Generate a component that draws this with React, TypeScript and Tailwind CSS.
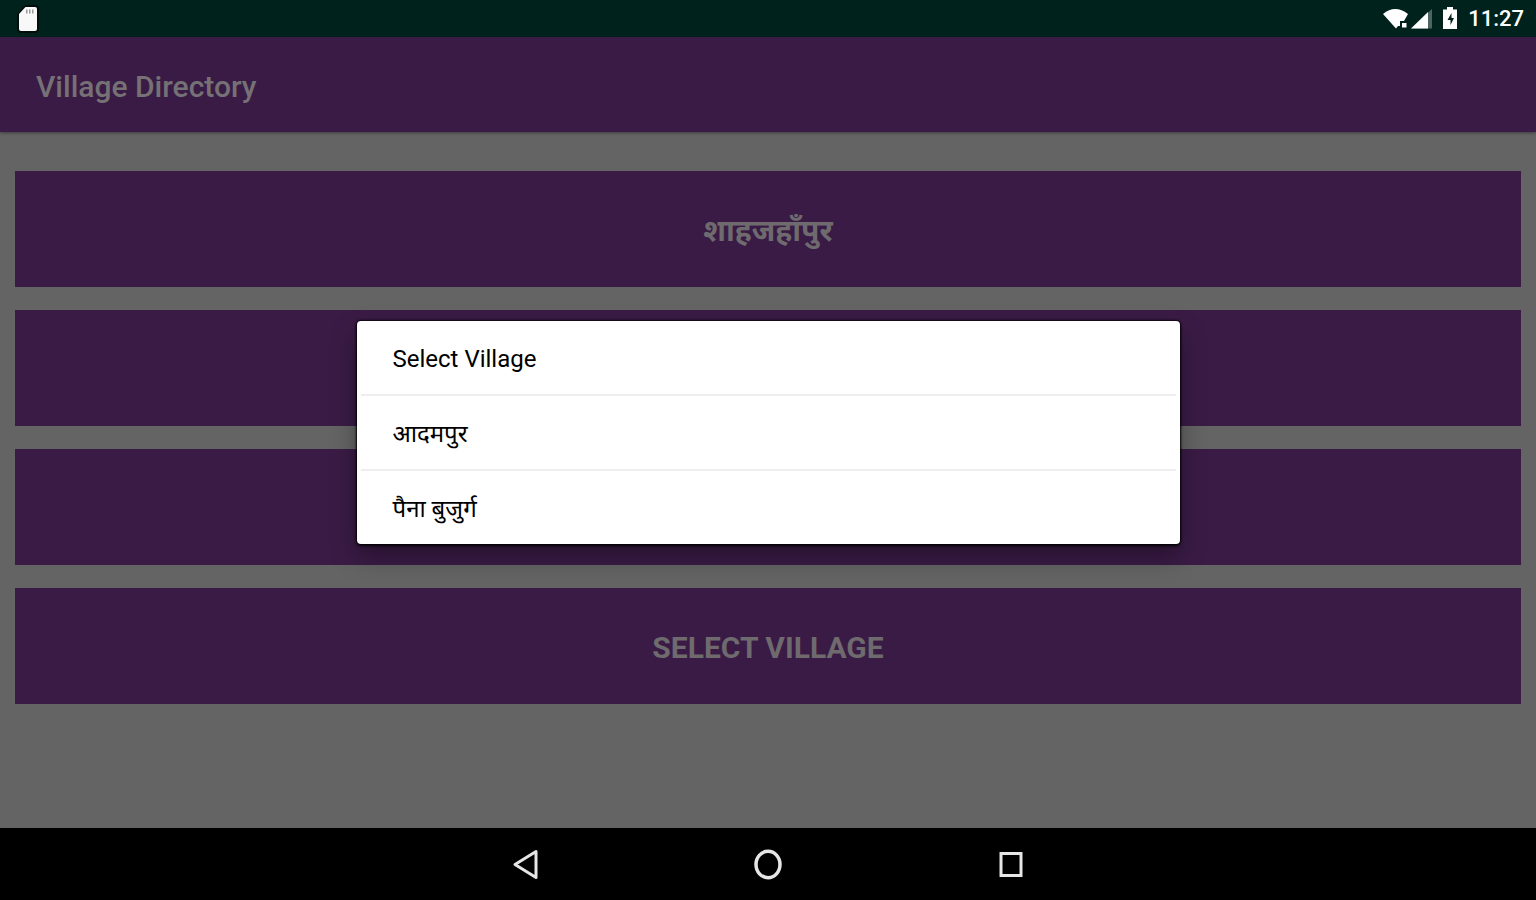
import React from 'react';

interface Picker {
    id: string;
    label: string;
}

const pickers: Picker[] = [
    { id: 'district', label: 'शाहजहाँपुर' },
    { id: 'tehsil', label: '' },
    { id: 'block', label: '' },
    { id: 'village', label: 'SELECT VILLAGE' },
];

const villages = ['Select Village', 'आदमपुर', 'पैना बुजुर्ग'];

const StatusBar: React.FC = () => (
    <header className="h-[37px] shrink-0 bg-[#00221d] flex items-center justify-between pl-4 pr-3 text-white">
        <svg className="w-6 h-[30px]" viewBox="0 0 24 30" aria-hidden="true">
            <path d="M9 1h10q4 0 4 4v20q0 4-4 4H5q-4 0-4-4V10z" fill="#000" fillOpacity="0.6" />
            <path d="M9.500 3h9.500q2 0 2 2v20q0 2-2 2H5q-2 0-2-2V10z" fill="#f8f8f8" />
            <path d="M10 5.500h1.500v4H10zM13 5.500h1.500v4H13zM16 5.500h1.500v4H16z" fill="#9a9a9a" />
        </svg>
        <div className="flex items-center">
            <svg className="w-[50px] h-[26px]" viewBox="0 0 50 26" aria-hidden="true">
                <path d="M1 8Q13-2 26 8l-4 7h-4v5h-2l-2 2.500z" fill="#fff" />
                <rect x="20" y="17" width="4.500" height="4.500" fill="#fff" />
                <path d="M29 22.500 50 3v19.500z" fill="#fff" fillOpacity="0.3" />
                <path d="M29 22.500 46 6v16.500z" fill="#fff" />
            </svg>
            <svg className="w-4 h-6 ml-[10px]" viewBox="0 0 16 24" aria-hidden="true">
                <path d="M5 0h6v2.500h4V22H1V2.500h4z" fill="#fff" />
                <path d="M9.500 6v5H12l-3.500 7v-5H5.500z" fill="#00221d" />
            </svg>
            <span className="ml-[10px] text-[22px] leading-[37px] font-medium">11:27</span>
        </div>
    </header>
);

const VillageDialog: React.FC = () => (
    <div className="absolute inset-0 flex items-center justify-center px-4">
        <div
            role="dialog"
            aria-label="Select Village"
            className="w-[823px] max-w-full bg-white rounded-sm shadow-[0_0_2px_1px_rgba(0,0,0,0.8),0_2px_3px_rgba(0,0,0,0.7),0_12px_26px_rgba(0,0,0,0.35)]"
        >
            <ul className="divide-y-2 divide-[#eeeeee] px-1">
                {villages.map((village) => (
                    <li key={village}>
                        <button type="button" className="w-full h-[73px] px-8 pt-0.5 text-left text-[24px] leading-8 text-black">
                            {village}
                        </button>
                    </li>
                ))}
            </ul>
        </div>
    </div>
);

const NavBar: React.FC = () => (
    <nav className="h-[72px] shrink-0 bg-black flex items-center justify-center gap-[211px] text-[#e6e6e6]">
        <button type="button" aria-label="Back" className="w-8 h-9">
            <svg className="w-8 h-9" viewBox="0 0 32 36" fill="none" stroke="currentColor" strokeWidth="3" strokeLinejoin="round">
                <path d="M27 5.500v26L6 18.500z" />
            </svg>
        </button>
        <button type="button" aria-label="Home" className="w-8 h-9">
            <svg className="w-8 h-9" viewBox="0 0 32 36" fill="none" stroke="currentColor" strokeWidth="3.500">
                <ellipse cx="16" cy="18.500" rx="12" ry="13.200" />
            </svg>
        </button>
        <button type="button" aria-label="Recent apps" className="w-8 h-9">
            <svg className="w-8 h-9" viewBox="0 0 32 36" fill="none" stroke="currentColor" strokeWidth="3">
                <rect x="6" y="7.500" width="20" height="22" />
            </svg>
        </button>
    </nav>
);

export default function App() {
    return (
        <div className="min-h-screen flex flex-col bg-[#646464] font-[Roboto,'Noto_Sans',sans-serif]">
            <StatusBar />
            <div className="relative flex-1 flex flex-col">
                <div className="h-[95px] shrink-0 bg-[#3a1b45] flex items-center px-9 pt-1 shadow-[0_1px_3px_rgba(0,0,0,0.4)]">
                    <h1 className="text-[30px] leading-9 font-medium text-[#757175]">Village Directory</h1>
                </div>
                <main className="flex flex-col gap-[23px] px-[15px] pt-[39px] pb-6">
                    {pickers.map((picker) => (
                        <button
                            key={picker.id}
                            type="button"
                            className="w-full h-[116px] pt-1 bg-[#3a1b45] text-[30px] leading-9 font-bold text-[#6e6a6e]"
                        >
                            {picker.label}
                        </button>
                    ))}
                </main>
                <VillageDialog />
            </div>
            <NavBar />
        </div>
    );
}
